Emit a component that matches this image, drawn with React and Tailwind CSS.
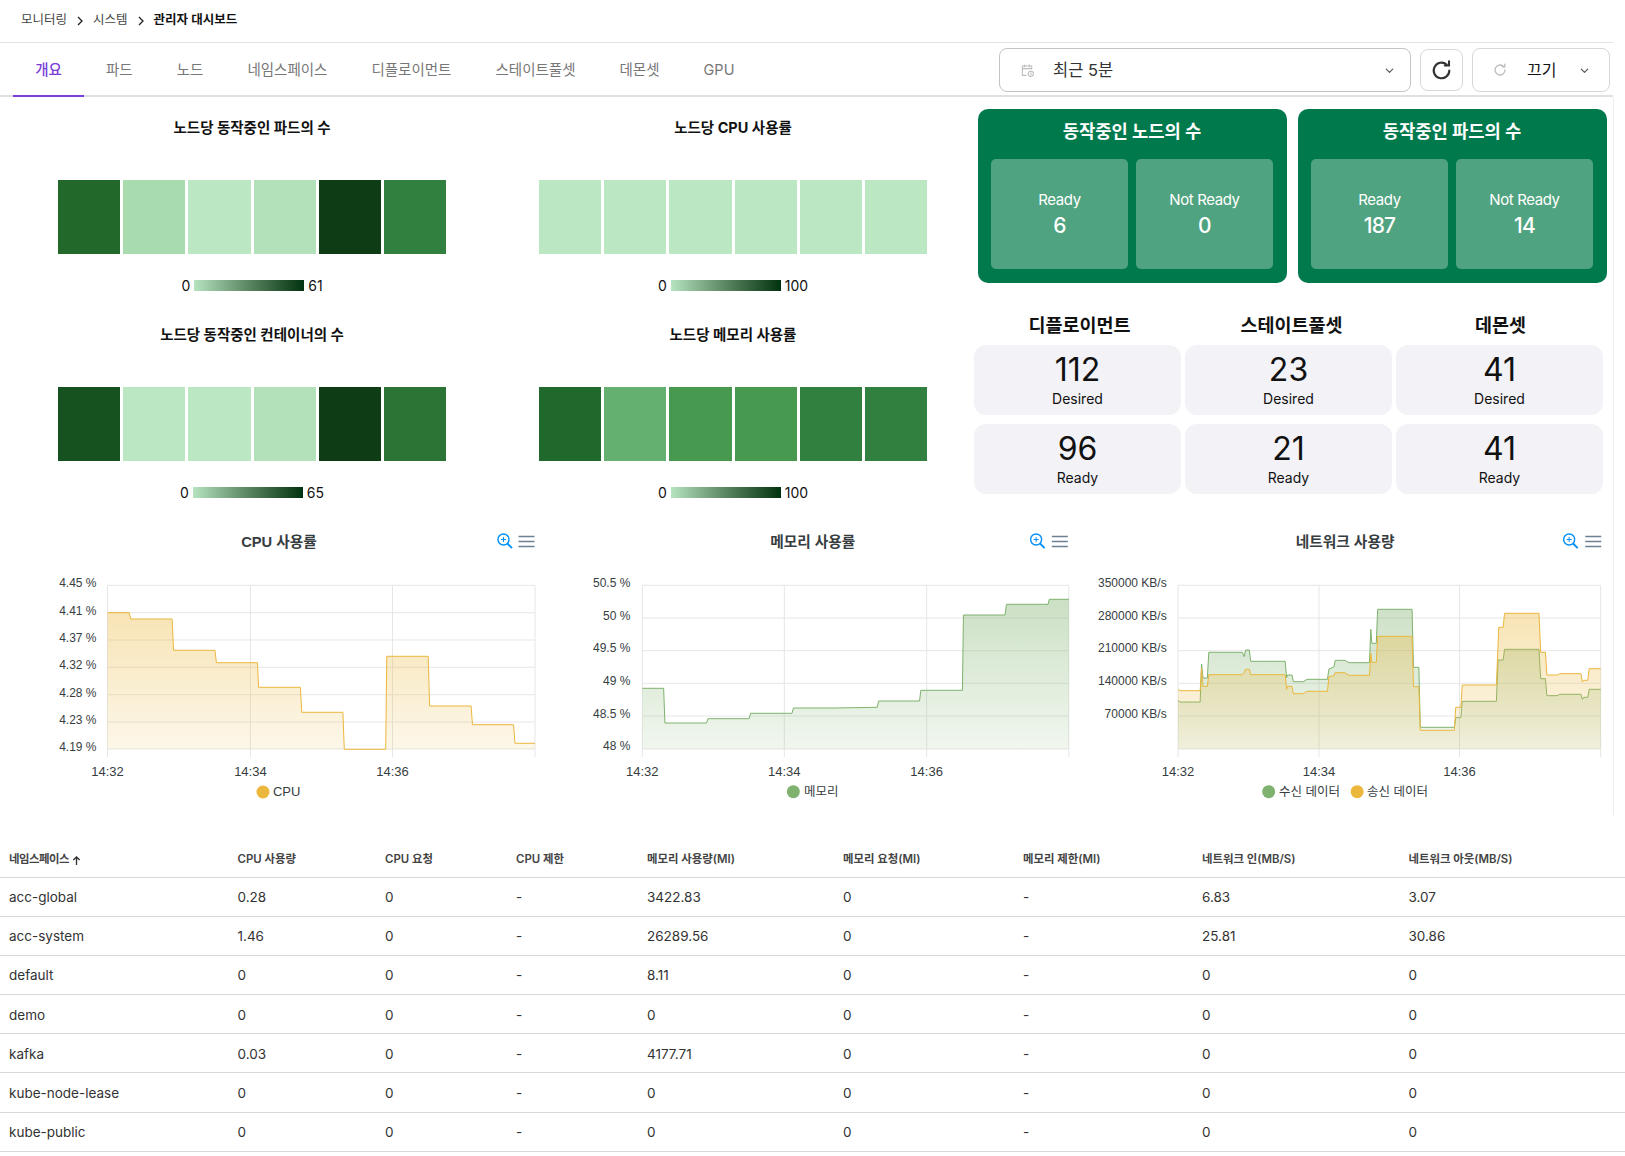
import React from "react";

const FONT = "font-['Inter','Noto_Sans_CJK_KR',sans-serif]";
const CF = "Liberation Sans, Noto Sans CJK KR, sans-serif";

function Chev({ className = "" }) {
  return (
    <svg viewBox="0 0 12 12" className={"w-[11px] h-[11px] " + className} fill="none" stroke="#555" strokeWidth="1.3" strokeLinecap="round" strokeLinejoin="round">
      <path d="M2.5 4.5 6 8l3.5-3.5" />
    </svg>
  );
}

function Crumbs() {
  const Sep = () => (
    <svg viewBox="0 0 8 10" className="w-2 h-2.5 mx-[9px] mt-0.5" fill="none" stroke="#222" strokeWidth="1.3">
      <path d="M2 1l4 4-4 4" />
    </svg>
  );
  return (
    <div className="h-[43px] border-b border-[#e3e3e3] flex items-center pl-[21px] text-[12.5px] text-[#444] pb-[2px]">
      <span>모니터링</span>
      <Sep />
      <span>시스템</span>
      <Sep />
      <span className="font-semibold text-[#111]">관리자 대시보드</span>
    </div>
  );
}

const TABS = ["개요", "파드", "노드", "네임스페이스", "디플로이먼트", "스테이트풀셋", "데몬셋", "GPU"];

function Toolbar() {
  return (
    <div className="h-[54px] border-b-2 border-[#e0e0e0] flex items-stretch pl-[13px]">
      <div className="flex -mb-[2px]">
        {TABS.map((t, i) => (
          <div
            key={t}
            className={
              "pt-[2px] flex items-center text-[14.5px] border-b-2 " +
              (i === 0 ? "border-[#7a3fd8] text-[#7a3fd8] font-medium w-[71px] justify-center" : "px-[22px] border-transparent text-[#777]")
            }
          >
            {t}
          </div>
        ))}
      </div>
      <div className="ml-auto flex items-center pt-[2px]">
        <div className="w-[412px] h-[44px] border border-[#c4c4c4] rounded-lg flex items-center pl-[20px] pr-[15px] text-[16.5px] text-[#333]">
          <svg viewBox="0 0 16 16" className="w-[15px] h-[15px] mr-[18px]" fill="none" stroke="#bbb" strokeWidth="1.1">
            <path d="M12.5 7V3.2h-10v10H7M2.5 6h10M5 1.5v3M10 1.5v3" />
            <circle cx="11.5" cy="11.5" r="2.8" />
            <path d="M11.5 10v1.6l1 .6" />
          </svg>
          <span>최근 5분</span>
          <Chev className="ml-auto" />
        </div>
        <div className="w-[43px] h-[42px] ml-[9px] border border-[#d8d8d8] rounded-lg flex items-center justify-center">
          <svg viewBox="0 0 24 24" className="w-[25px] h-[25px]" fill="none" stroke="#333" strokeWidth="2" strokeLinecap="round">
            <path d="M19.5 12a7.5 7.5 0 1 1-2.6-5.7" />
            <path d="M19.2 3.2v4h-4" />
          </svg>
        </div>
        <div className="w-[138px] h-[44px] ml-[9px] mr-[3px] border border-[#d8d8d8] rounded-lg flex items-center pl-[19px] pr-[19px] text-[16px] text-[#111]">
          <svg viewBox="0 0 24 24" className="w-[16px] h-[16px] mr-[19px]" fill="none" stroke="#bbb" strokeWidth="2" strokeLinecap="round">
            <path d="M19.5 12a7.5 7.5 0 1 1-2.6-5.7" />
            <path d="M19.2 3.2v4h-4" />
          </svg>
          <span>끄기</span>
          <Chev className="ml-auto" />
        </div>
      </div>
    </div>
  );
}

function Heat({ title, colors, max }) {
  return (
    <div className="flex flex-col items-center h-[207px]">
      <div className="text-[14.5px] font-bold text-[#111] mt-[6px] h-[20px] leading-[20px]">{title}</div>
      <div className="flex w-[388px] gap-[3px] mt-[42px] h-[74px]">
        {colors.map((c, i) => (
          <div key={i} className="flex-1" style={{ background: c }} />
        ))}
      </div>
      <div className="flex items-center mt-[23px] text-[14px] text-[#111] h-[16px]">
        <span className="mr-[4px]">0</span>
        <div className="w-[110px] h-[11px] bg-gradient-to-r from-[#b7e4c0] to-[#00330f]" />
        <span className="ml-[4px]">{max}</span>
      </div>
    </div>
  );
}

function GreenCard({ title, a, b }) {
  const Box = ({ l, v }) => (
    <div className="flex-1 h-[110px] bg-[#4fa380] rounded-[5px] flex flex-col items-center pt-[31px] text-white">
      <div className="text-[15px] leading-[20px] tracking-[-0.4px]">{l}</div>
      <div className="text-[21px] leading-[30px] font-medium tracking-[-0.8px] mt-[1px]">{v}</div>
    </div>
  );
  return (
    <div className="w-[309px] h-[174px] bg-[#007a4d] rounded-[10px] pt-[11px] pl-[13px] pr-[14px] text-white">
      <div className="text-center text-[17.7px] font-bold h-[39px] leading-[24px]">{title}</div>
      <div className="flex gap-[8px]">
        <Box l="Ready" v={a} />
        <Box l="Not Ready" v={b} />
      </div>
    </div>
  );
}

function Stat({ n, l }) {
  return (
    <div className="h-[70px] bg-[#f2f2f7] rounded-[12px] flex flex-col items-center text-[#111]">
      <div className="text-[32px] leading-[38px] mt-[6px]">{n}</div>
      <div className="text-[14px] leading-[20px]">{l}</div>
    </div>
  );
}

const toPts = (pts, ox, sx) => pts.map(([x, y]) => [ox + x / sx, 520 + y / 3]);
const line = (p) => p.map(([x, y], i) => (i ? "L" : "M") + x.toFixed(1) + " " + y.toFixed(1)).join(" ");
const area = (p, b) => line(p) + ` L${p[p.length - 1][0].toFixed(1)} ${b} L${p[0][0].toFixed(1)} ${b} Z`;

const ORANGE = "#ebb73c";
const GREEN = "#7fb26e";

function Chart({ id, vx, x0, x1, vs, hs, ylabels, ylabelRight, title, tx, zx, mx, series, legend, xLabelY, legendY, legendSize }) {
  const top = 585.3, bot = 749;
  return (
    <svg viewBox={`${vx} 520 537.67 295`} className="block w-full h-[295px]" style={{ fontFamily: CF }}>
      <defs>
        {series.map((s, i) => (
          <linearGradient key={i} id={`${id}${i}`} gradientUnits="userSpaceOnUse" x1="0" x2="0" y1={top} y2={bot}>
            <stop offset="0" stopColor={s.color} stopOpacity={0.43} />
            <stop offset="1" stopColor={s.color} stopOpacity={0.11} />
          </linearGradient>
        ))}
      </defs>
      <text x={tx} y="547" textAnchor="middle" fontSize="14.7" fontWeight="700" fill="#373d3f">{title}</text>
      <g fill="none" stroke="#008ffb" strokeWidth="1.4">
        <circle cx={zx - 1.5} cy="539.5" r="5.5" />
        <path d={`M${zx + 2.4} 543.5l4.6 4.6`} strokeWidth="1.8" />
        <path d={`M${zx - 4} 539.5h5M${zx - 1.5} 537v5`} strokeWidth="1" />
      </g>
      <path d={`M${mx - 8} 536.5h16M${mx - 8} 541.5h16M${mx - 8} 546.5h16`} stroke="#6e8192" strokeWidth="1.6" />
      <g stroke="#e6e6e6" strokeWidth="1">
        {hs.map((y) => <line key={y} x1={x0} x2={x1} y1={y} y2={y} />)}
        {vs.map((x) => <line key={x} x1={x} x2={x} y1={top} y2="757" />)}
      </g>
      {series.map((s, i) => {
        const p = toPts(s.pts, s.ox, s.sx);
        return (
          <g key={i}>
            <path d={area(p, bot)} fill={`url(#${id}${i})`} />
            <path d={line(p)} fill="none" stroke={s.color} strokeWidth="1" />
          </g>
        );
      })}
      <g fontSize="12" fill="#373d3f" textAnchor="end">
        {ylabels.map(([t, y]) => <text key={t} x={ylabelRight} y={y + 4}>{t}</text>)}
      </g>
      <g fontSize="13" fill="#373d3f" textAnchor="middle">
        {vs.slice(0, 3).map((x, i) => <text key={x} x={x} y={xLabelY}>{["14:32", "14:34", "14:36"][i]}</text>)}
      </g>
      <g fontSize={legendSize} fill="#373d3f">
        {legend.map(([t, cx, lx, c]) => (
          <g key={t}>
            <circle cx={cx} cy={legendY} r="6.5" fill={c} />
            <text x={lx} y={legendY + 4}>{t}</text>
          </g>
        ))}
      </g>
    </svg>
  );
}

const cpu = [[301,278],[362,278],[366,297],[482,297],[486,391],[602,391],[606,428],[721,428],[724,502],[841,502],[845,577],[960,577],[964,688],[1080,688],[1083,409],[1199,409],[1203,558],[1319,558],[1323,614],[1438,614],[1442,670],[1498,670]];
const mem = [[241,505],[304,505],[308,609],[431,609],[435,596],[557,596],[561,580],[684,580],[688,564],[810,564],[936,562],[940,543],[1061,543],[1065,511],[1188,511],[1191,285],[1314,285],[1318,253],[1441,253],[1445,238],[1503,238]];
const rx = [[259,541],[265,546],[324,546],[328,432],[332,474],[345,474],[349,397],[448,397],[453,410],[457,390],[468,390],[472,424],[573,424],[577,473],[580,465],[593,465],[597,485],[626,485],[637,478],[697,478],[701,448],[716,440],[720,421],[748,421],[760,428],[820,428],[824,328],[827,370],[840,370],[844,268],[945,268],[949,442],[965,442],[969,622],[1069,622],[1073,593],[1088,593],[1092,544],[1192,544],[1197,420],[1212,420],[1216,388],[1317,388],[1322,476],[1336,476],[1340,527],[1370,527],[1378,523],[1440,523],[1444,538],[1448,532],[1460,532],[1464,508],[1498,508]];
const tx = [[259,508],[265,512],[324,512],[328,445],[332,499],[345,499],[349,464],[448,464],[453,457],[457,448],[468,448],[472,464],[573,464],[577,508],[580,499],[593,499],[597,521],[626,521],[637,514],[697,514],[701,470],[716,467],[720,458],[748,458],[760,466],[820,466],[824,400],[827,427],[840,427],[844,349],[945,349],[949,500],[965,500],[969,631],[1069,631],[1073,562],[1088,562],[1092,495],[1192,495],[1197,376],[1199,322],[1212,322],[1216,280],[1317,280],[1322,397],[1336,397],[1340,465],[1370,465],[1378,461],[1440,461],[1444,486],[1448,481],[1460,481],[1464,446],[1498,446]];

const H6 = [585.3, 612.7, 640, 667.3, 694.7, 722, 749];
const H5 = [585.3, 618, 650.7, 683.3, 716, 749];

const HEAD = ["네임스페이스", "CPU 사용량", "CPU 요청", "CPU 제한", "메모리 사용량(MI)", "메모리 요청(MI)", "메모리 제한(MI)", "네트워크 인(MB/S)", "네트워크 아웃(MB/S)"];
const ROWS = [
  ["acc-global", "0.28", "0", "-", "3422.83", "0", "-", "6.83", "3.07"],
  ["acc-system", "1.46", "0", "-", "26289.56", "0", "-", "25.81", "30.86"],
  ["default", "0", "0", "-", "8.11", "0", "-", "0", "0"],
  ["demo", "0", "0", "-", "0", "0", "-", "0", "0"],
  ["kafka", "0.03", "0", "-", "4177.71", "0", "-", "0", "0"],
  ["kube-node-lease", "0", "0", "-", "0", "0", "-", "0", "0"],
  ["kube-public", "0", "0", "-", "0", "0", "-", "0", "0"],
];
const COLW = [228.5, 147.5, 131, 131, 196, 180, 179, 206.5, 226];

export default function App() {
  return (
    <div className={FONT + " w-[1625px] bg-white overflow-hidden"}>
      <div className="w-[1613px]">
        <Crumbs />
        <Toolbar />
      </div>
      <div className="w-[1614px] border-r border-[#eeeeee] h-[718px]">
        <div className="flex h-[423px]">
          <div className="w-[970px] grid grid-cols-[505px_465px] pt-[15px] content-start">
            <div className="-ml-[1px]">
              <Heat title="노드당 동작중인 파드의 수" max="61" colors={["#22682b", "#a8dbae", "#bbe8c2", "#b3e1b9", "#0e3d15", "#32803f"]} />
            </div>
            <div className="-ml-[9px]">
              <Heat title="노드당 CPU 사용률" max="100" colors={["#bbe8c2", "#bbe8c2", "#bbe8c2", "#bbe8c2", "#bbe8c2", "#bbe8c2"]} />
            </div>
            <div className="-ml-[1px]">
              <Heat title="노드당 동작중인 컨테이너의 수" max="65" colors={["#16521f", "#bbe8c2", "#bbe8c2", "#b3e1b9", "#0e3d15", "#2c7435"]} />
            </div>
            <div className="-ml-[9px]">
              <Heat title="노드당 메모리 사용률" max="100" colors={["#20692c", "#64b070", "#46994f", "#46994f", "#32803f", "#32803f"]} />
            </div>
          </div>
          <div className="flex-1 pl-[8px] pt-[12px]">
            <div className="flex gap-[11px]">
              <GreenCard title="동작중인 노드의 수" a="6" b="0" />
              <GreenCard title="동작중인 파드의 수" a="187" b="14" />
            </div>
            <div className="grid grid-cols-3 gap-x-[4px] -ml-[4px] w-[629px] mt-[28px]">
              <div className="text-center text-[18.5px] font-bold leading-[29px] h-[34px] text-[#111] pl-[4px]">디플로이먼트</div>
              <div className="text-center text-[18.5px] font-bold leading-[29px] h-[34px] text-[#111] pl-[6px]">스테이트풀셋</div>
              <div className="text-center text-[18.5px] font-bold leading-[29px] h-[34px] text-[#111] pl-[2px]">데몬셋</div>
            </div>
            <div className="grid grid-cols-3 gap-x-[4px] gap-y-[9px] -ml-[4px] w-[629px]">
              <Stat n="112" l="Desired" />
              <Stat n="23" l="Desired" />
              <Stat n="41" l="Desired" />
              <Stat n="96" l="Ready" />
              <Stat n="21" l="Ready" />
              <Stat n="41" l="Ready" />
            </div>
          </div>
        </div>
        <div className="grid grid-cols-3 h-[295px]">
          <Chart
            id="c" vx={0} x0={107.5} x1={535} vs={[107.5, 250.4, 392.5, 535]} hs={H6}
            ylabelRight={96.5}
            ylabels={[["4.45 %", 582.7], ["4.41 %", 610.7], ["4.37 %", 637.7], ["4.32 %", 665], ["4.28 %", 693], ["4.23 %", 720], ["4.19 %", 747]]}
            title="CPU 사용률" tx={279} zx={505} mx={526.5}
            series={[{ pts: cpu, ox: 0, sx: 2.8, color: ORANGE }]}
            legend={[["CPU", 263, 273, ORANGE]]}
            xLabelY={776.5} legendY={792} legendSize={13}
          />
          <Chart
            id="m" vx={537.67} x0={642} x1={1068.5} vs={[642, 784, 926.3, 1068.5]} hs={H5}
            ylabelRight={630}
            ylabels={[["50.5 %", 582.7], ["50 %", 616], ["49.5 %", 647.7], ["49 %", 681], ["48.5 %", 713.7], ["48 %", 746]]}
            title="메모리 사용률" tx={812.4} zx={1037.3} mx={1059.5}
            series={[{ pts: mem, ox: 560.5, sx: 2.958, color: GREEN }]}
            legend={[["메모리", 793, 803.7, GREEN]]}
            xLabelY={776} legendY={791.7} legendSize={12.5}
          />
          <Chart
            id="n" vx={1075.33} x0={1178.4} x1={1601} vs={[1178.4, 1319.3, 1459.8, 1601]} hs={H5}
            ylabelRight={1167}
            ylabels={[["350000 KB/s", 582.7], ["280000 KB/s", 616], ["210000 KB/s", 647.7], ["140000 KB/s", 681], ["70000 KB/s", 713.7]]}
            title="네트워크 사용량" tx={1345.4} zx={1571} mx={1593.6}
            series={[{ pts: rx, ox: 1090, sx: 2.931, color: GREEN }, { pts: tx, ox: 1090, sx: 2.931, color: ORANGE }]}
            legend={[["수신 데이터", 1269, 1279.4, GREEN], ["송신 데이터", 1357.5, 1367.4, ORANGE]]}
            xLabelY={776} legendY={791.7} legendSize={12.5}
          />
        </div>
      </div>
      <table className="table-fixed border-collapse w-[1625px] mt-[23px]">
        <colgroup>
          {COLW.map((w, i) => <col key={i} style={{ width: w }} />)}
        </colgroup>
        <thead>
          <tr className="h-[39px] border-b border-[#d8d8d8]">
            {HEAD.map((h, i) => (
              <th key={h} className={"text-left pl-[9px] pt-[4px] pr-0 pb-0 text-[11.4px] font-semibold text-[#444] " + (i === 0 ? "tracking-[-0.5px]" : "")}>
                <span className="inline-flex items-center">
                  {h}
                  {i === 0 && (
                    <svg viewBox="0 0 10 12" className="w-[9px] h-[11px] ml-[3px] mt-[2px]" fill="none" stroke="#333" strokeWidth="1.5">
                      <path d="M5 11V2M1.5 5.5 5 2l3.5 3.5" />
                    </svg>
                  )}
                </span>
              </th>
            ))}
          </tr>
        </thead>
        <tbody>
          {ROWS.map((r) => (
            <tr key={r[0]} className="h-[39.2px] border-b border-[#d8d8d8]">
              {r.map((c, i) => (
                <td key={i} className="pl-[9px] pt-[1px] pr-0 pb-0 text-[13.5px] text-[#333]">{c}</td>
              ))}
            </tr>
          ))}
        </tbody>
      </table>
    </div>
  );
}
